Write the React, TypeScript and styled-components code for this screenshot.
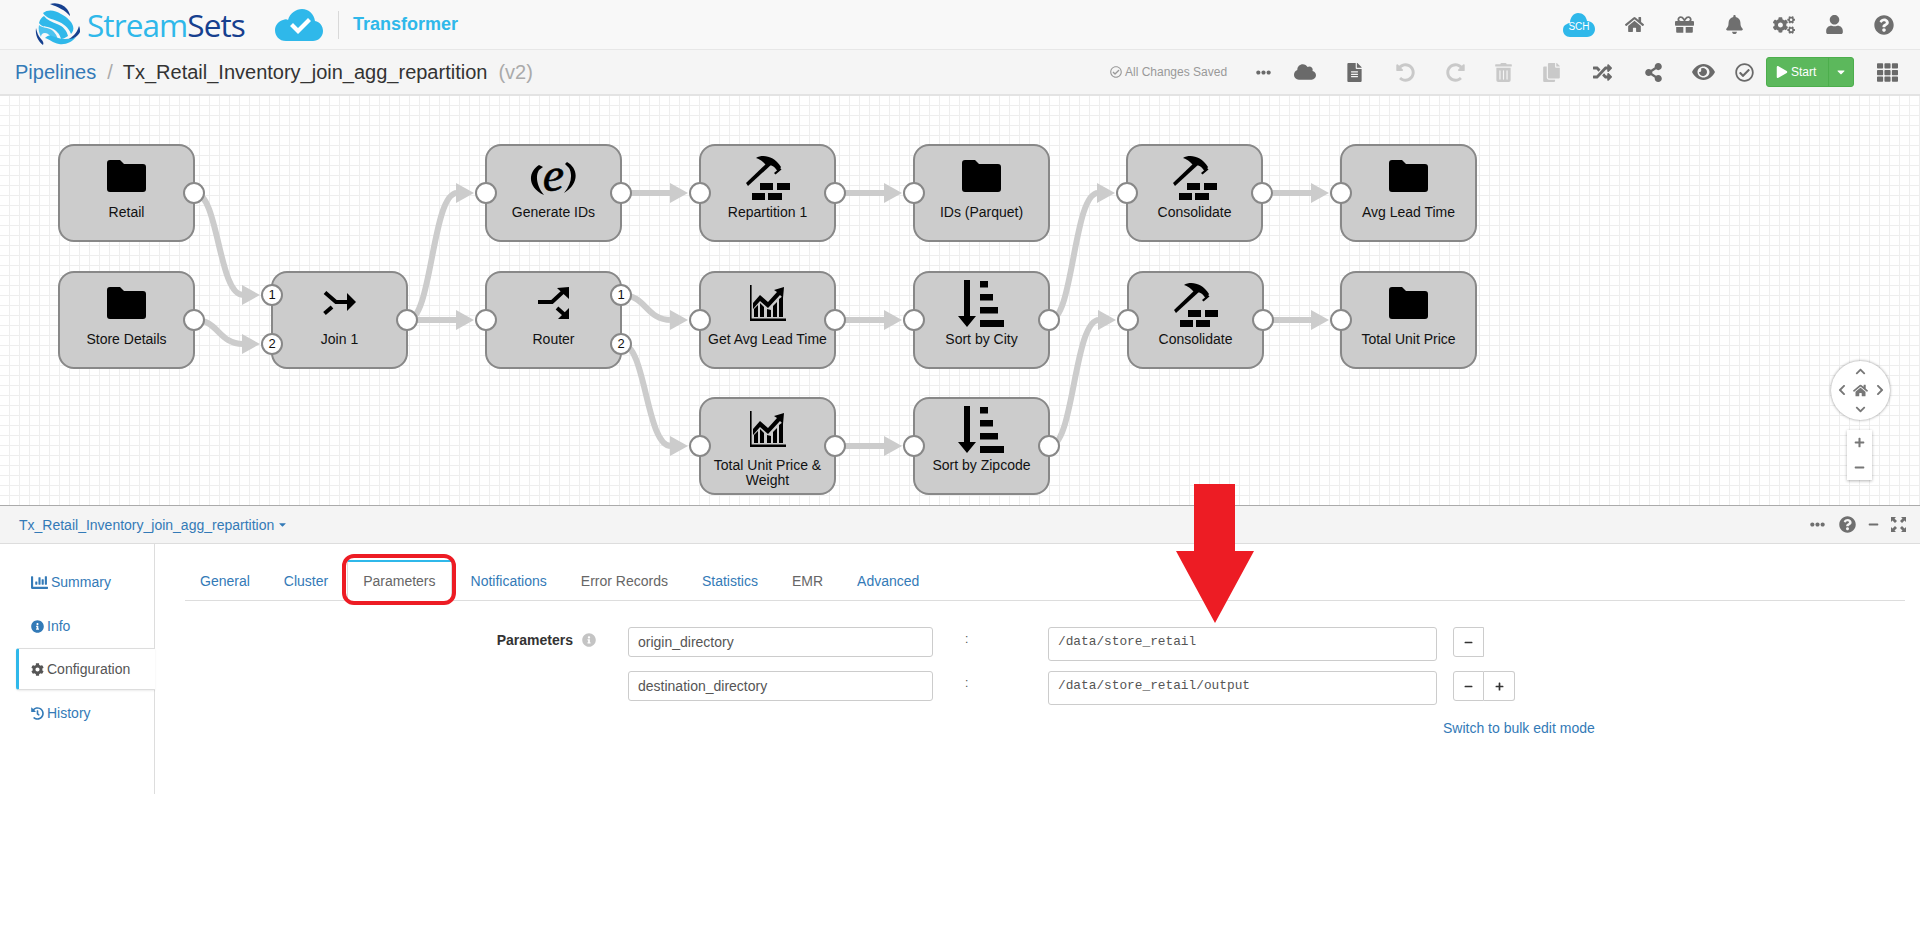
import * as React from "react";
import styled, { createGlobalStyle } from "styled-components";
import {
  FaCaretDown,
  FaChartBar,
  FaChevronDown,
  FaChevronLeft,
  FaChevronRight,
  FaChevronUp,
  FaCloud,
  FaCog,
  FaCogs,
  FaCopy,
  FaEllipsisH,
  FaFileAlt,
  FaGift,
  FaBell,
  FaHistory,
  FaHome,
  FaInfoCircle,
  FaMinus,
  FaPlay,
  FaPlus,
  FaQuestionCircle,
  FaRandom,
  FaRedoAlt,
  FaRegCheckCircle,
  FaShareAlt,
  FaTh,
  FaTrashAlt,
  FaUndoAlt,
  FaUser,
} from "react-icons/fa";

const BLUE = "#337ab7";
const SKY = "#2fb8ea";
const RED = "#ed1c24";

const GlobalStyle = createGlobalStyle`
  html, body {
    margin: 0;
    padding: 0;
    background: #fff;
    font-family: "Liberation Sans", Arial, sans-serif;
    font-size: 14px;
    color: #333;
  }
  * { box-sizing: border-box; }
`;

const Page = styled.div`
  position: relative;
  width: 1920px;
  height: 951px;
  overflow: hidden;
`;

/* top bar */

const TopBar = styled.header`
  display: flex;
  align-items: center;
  height: 50px;
  padding-left: 35px;
  background: #f8f8f8;
  border-bottom: 1px solid #e7e7e7;
`;

const LogoText = styled.div`
  margin-left: 6px;
  font-family: "Open Sans", sans-serif;
  font-size: 31.5px;
  letter-spacing: -0.9px;
  color: ${SKY};
  line-height: 48px;
  width: 181px;

  b {
    font-weight: 400;
    color: #16408f;
  }
`;

const ProductDivider = styled.div`
  width: 1px;
  height: 28px;
  margin: 0 14px 0 15px;
  background: #d9d9d9;
`;

const ProductName = styled.div`
  font-size: 18px;
  font-weight: 700;
  color: ${SKY};
`;

const TopIcons = styled.div`
  display: flex;
  align-items: center;
  margin-left: auto;
  color: #6f6f6f;
`;

const TopIcon = styled.span<{ $w: number }>`
  display: flex;
  justify-content: center;
  width: ${(p) => p.$w}px;
  font-size: 19px;
`;

const SchBadge = styled.div`
  position: relative;
  display: flex;
  width: 32px;
  height: 24px;
  margin-right: 14px;

  span {
    position: absolute;
    left: 0;
    right: 0;
    top: 8px;
    text-align: center;
    font-size: 10px;
    line-height: 12px;
    color: #fff;
  }
`;

/* breadcrumb + toolbar */

const SubBar = styled.div`
  display: flex;
  align-items: center;
  height: 46px;
  padding: 0 0 0 15px;
  background: #f5f5f5;
  border-bottom: 2px solid #e3e3e3;
  font-size: 20px;
`;

const Crumb = styled.span`
  color: ${BLUE};
`;

const CrumbSlash = styled.span`
  margin: 0 10px 0 11px;
  color: #aaa;
`;

const Version = styled.span`
  margin-left: 11px;
  color: #aaa;
`;

const SavedNote = styled.div`
  display: flex;
  align-items: center;
  gap: 3px;
  margin-left: auto;
  width: 135px;
  font-size: 12px;
  color: #999;
`;

const ToolIcon = styled.span<{ $off?: boolean; $w?: number }>`
  display: flex;
  justify-content: center;
  width: ${(p) => p.$w ?? 50}px;
  font-size: 19px;
  color: ${(p) => (p.$off ? "#c9c9c9" : "#6a6a6a")};
`;

const StartGroup = styled.div`
  display: flex;
  width: 88px;
  height: 30px;
  margin: 0 22px 0 6px;
  border: 1px solid #4cae4c;
  border-radius: 3px;
  background: #5cb85c;
  color: #fff;
  font-size: 12px;
`;

const StartMain = styled.div`
  display: flex;
  align-items: center;
  gap: 3px;
  width: 62px;
  padding-left: 9px;
  border-right: 1px solid #4cae4c;
`;

const StartCaret = styled.div`
  display: flex;
  align-items: center;
  justify-content: center;
  flex: 1;
`;

/* pipeline canvas */

const Canvas = styled.section`
  position: relative;
  height: 409px;
  background-color: #fff;
  background-image: linear-gradient(to right, #eee 1px, transparent 1px),
    linear-gradient(to bottom, #eee 1px, transparent 1px);
  background-size: 10px 10px;
  background-position: 9px 9px;
  overflow: hidden;
`;

const EdgeLayer = styled.svg`
  position: absolute;
  inset: 0;
`;

const Node = styled.div<{ $x: number; $y: number }>`
  position: absolute;
  left: ${(p) => p.$x}px;
  top: ${(p) => p.$y}px;
  width: 137px;
  height: 98px;
  padding-top: 60px;
  background: #ccc;
  border: 2px solid #888;
  border-radius: 16px;
`;

const NodeIcon = styled.div`
  position: absolute;
  left: 0;
  right: 0;
  top: 0;
  height: 60px;
  display: flex;
  align-items: center;
  justify-content: center;
  color: #000;
`;

const NodeLabel = styled.div`
  margin-top: -1px;
  padding: 0 4px;
  text-align: center;
  font-size: 14px;
  line-height: 15px;
  color: #111;
`;

const Port = styled.div<{ $side: "left" | "right"; $top: number }>`
  position: absolute;
  ${(p) => p.$side}: -12px;
  top: ${(p) => p.$top}px;
  width: 22px;
  height: 22px;
  border: 2px solid #888;
  border-radius: 50%;
  background: #fff;
  font-size: 13px;
  line-height: 18px;
  text-align: center;
  color: #111;
`;

const ExprIcon = styled.div`
  position: relative;
  width: 47px;
  height: 33px;
  margin-top: 4px;
  text-align: center;

  span {
    font-family: "Liberation Serif", serif;
    font-style: italic;
    font-weight: 400;
    font-size: 48px;
    line-height: 26px;
    -webkit-text-stroke: 0.6px #000;
  }

  svg {
    position: absolute;
    left: 0;
    top: 0;
  }
`;

const PanControl = styled.div`
  position: absolute;
  left: 1831px;
  top: 265px;
  width: 59px;
  height: 59px;
  border-radius: 50%;
  background: #fff;
  box-shadow: 0 0 3px rgba(0, 0, 0, 0.45);
  color: #777;
  font-size: 11px;
`;

const PanGlyph = styled.span<{ $x: number; $y: number; $size?: number }>`
  position: absolute;
  left: ${(p) => p.$x}px;
  top: ${(p) => p.$y}px;
  display: flex;
  font-size: ${(p) => p.$size ?? 11}px;
`;

const ZoomControl = styled.div`
  position: absolute;
  left: 1847px;
  top: 334px;
  width: 25px;
  height: 50px;
  display: flex;
  flex-direction: column;
  align-items: center;
  justify-content: space-around;
  background: #fff;
  box-shadow: 0 1px 3px rgba(0, 0, 0, 0.3);
  color: #777;
  font-size: 11px;
`;

/* detail pane */

const DetailHeader = styled.div`
  display: flex;
  align-items: center;
  height: 39px;
  padding: 0 3px 0 19px;
  background: #f4f4f4;
  border-top: 1px solid #aaa;
  border-bottom: 1px solid #ddd;
  color: ${BLUE};
`;

const PipelineMenu = styled.div`
  display: flex;
  align-items: center;
  gap: 3px;
`;

const DetailTools = styled.div`
  display: flex;
  align-items: center;
  margin-left: auto;
  color: #6f6f6f;
  font-size: 13px;
`;

const DetailTool = styled.span<{ $w: number; $size?: number }>`
  display: flex;
  justify-content: center;
  width: ${(p) => p.$w}px;
  font-size: ${(p) => p.$size ?? 13}px;
`;

const DetailBody = styled.div`
  display: flex;
  align-items: flex-start;
`;

const SideNav = styled.nav`
  width: 155px;
  height: 250px;
  padding-top: 16px;
  border-right: 1px solid #ddd;
`;

const SideItem = styled.div<{ $active?: boolean }>`
  display: flex;
  align-items: center;
  gap: 3px;
  height: 44px;
  margin-left: 16px;
  padding-left: 15px;
  color: ${BLUE};
  ${(p) =>
    p.$active &&
    `
    height: 42px;
    margin: 0 -1px 1px 16px;
    padding-left: 12px;
    background: #fff;
    color: #555;
    border-left: 3px solid ${SKY};
    border-top: 1px solid #ddd;
    border-bottom: 1px solid #ddd;
    border-radius: 3px 0 0 3px;
    box-shadow: 0 1px 2px rgba(0,0,0,.08);
  `}
`;

const Content = styled.div`
  flex: 1;
  padding: 16px 15px 0 30px;
`;

const Tabs = styled.div`
  display: flex;
  height: 41px;
  border-bottom: 1px solid #ddd;
`;

const Tab = styled.div<{ $active?: boolean; $muted?: boolean }>`
  padding: 11px 15px 0;
  height: 41px;
  line-height: 20px;
  margin-right: 4px;
  color: ${(p) => (p.$active || p.$muted ? "#666" : BLUE)};
  ${(p) =>
    p.$active &&
    `
    padding-top: 9px;
    border-top: 2px solid ${SKY};
    border-left: 1px solid #ddd;
    border-right: 1px solid #ddd;
    background: #fff;
  `}
`;

const ParamGrid = styled.div`
  display: grid;
  grid-template-columns: 414px 305px 115px 389px 16px auto;
  grid-auto-rows: 44px;
  margin-top: 26px;
  padding-left: 29px;
  align-items: start;
`;

const ParamLabel = styled.div`
  display: flex;
  align-items: center;
  justify-content: flex-end;
  gap: 9px;
  padding: 5px 32px 0 0;
  font-weight: 700;
  font-size: 14px;
  color: #333;
`;

const InfoGlyph = styled.span`
  display: flex;
  color: #c4c4c4;
  font-size: 14px;
`;

const KeyInput = styled.div`
  height: 30px;
  padding: 0 9px;
  line-height: 28px;
  border: 1px solid #ccc;
  border-radius: 3px;
  background: #fff;
  font-size: 14px;
  color: #555;
`;

const ValueInput = styled.div`
  height: 34px;
  padding: 0 9px;
  line-height: 27px;
  border: 1px solid #ccc;
  border-radius: 3px;
  background: #fff;
  font-family: "Liberation Mono", monospace;
  font-size: 12.8px;
  color: #555;
`;

const Colon = styled.div`
  padding: 5px 0 0 32px;
  font-size: 12px;
  color: #555;
`;

const ButtonPair = styled.div`
  display: flex;
`;

const SmallButton = styled.div<{ $join?: boolean }>`
  display: flex;
  align-items: center;
  justify-content: center;
  width: 31px;
  height: 30px;
  border: 1px solid #ccc;
  border-left-width: ${(p) => (p.$join ? 0 : 1)}px;
  border-radius: ${(p) => (p.$join ? "0 3px 3px 0" : "3px 0 0 3px")};
  background: #fff;
  color: #333;
  font-size: 9px;
`;

const BulkLink = styled.div`
  grid-column: 4 / span 3;
  padding: 0 0 0 395px;
  margin-top: 5px;
  color: ${BLUE};
  font-size: 14px;
  white-space: nowrap;
`;

/* the red marks someone drew on the screenshot */

const TabMark = styled.div`
  position: absolute;
  left: 342px;
  top: 554px;
  width: 114px;
  height: 51px;
  border: 4px solid ${RED};
  border-radius: 12px;
`;

const ArrowMark = styled.svg`
  position: absolute;
  left: 1176px;
  top: 484px;
`;

/* stage icons */

const FolderIcon = () => (
  <svg width="39" height="32" viewBox="0 0 39 32">
    <path d="M3 0h10l4 4h19a3 3 0 0 1 3 3v22a3 3 0 0 1-3 3H3a3 3 0 0 1-3-3V3a3 3 0 0 1 3-3z" fill="#000" />
  </svg>
);

const HammerIcon = () => (
  <svg width="46" height="46" viewBox="0 0 46 46" style={{ marginTop: 4 }}>
    <path d="M1 28L24 6l3 3L3 31z" fill="#000" />
    <path d="M11 3C18-1 29 1 36 12l-3 5c-3-5-7-8-11-6l-4-4c-2-2-4-3-7-4z" fill="#000" />
    <path d="M29 18l6-5 1.500 1.500-6 5z" fill="#000" />
    <path d="M15 28h13v7H15zM32 28h13v7H32zM7 38h13v7H7zM23 38h14v7H23z" fill="#000" />
  </svg>
);

const ChartIcon = () => (
  <svg width="36" height="36" viewBox="0 0 36 36" fill="#000">
    <path d="M0 0h1.600v33.500H36V36H0z" />
    <path d="M3 18l7-8 8 7 9-10-3-2 10-3-1 11-3-3-12 13-8-7-7 8z" />
    <path d="M4 24l4-4v12H4zM10 18l4 4v10h-4zM17 24l4 1v7h-4zM23 21l4-4v15h-4zM29 14l4-3v21h-4z" />
  </svg>
);

const SortIcon = () => (
  <svg width="46" height="47" viewBox="0 0 46 47" fill="#000" style={{ marginTop: 1, marginLeft: -2 }}>
    <path d="M6 0h6v36h6L9 47 0 36h6z" />
    <path d="M22 1h8v6.500h-8zM22 14h13v6.500H22zM22 27h18v6.500H22zM22 40h24v7H22z" />
  </svg>
);

const JoinIcon = () => (
  <svg width="33" height="25" viewBox="0 0 33 25">
    <path d="M2 1.500L13 11h12" fill="none" stroke="#000" strokeWidth="4" />
    <path d="M24 2l9 9-9 9z" fill="#000" />
    <path d="M1.500 22.500L9 16" fill="none" stroke="#000" strokeWidth="4" />
  </svg>
);

const RouterIcon = () => (
  <svg width="32" height="33" viewBox="0 0 32 33">
    <path d="M0 15h14L27 3" fill="none" stroke="#000" strokeWidth="4" />
    <path d="M19 1l12-1v12z" fill="#000" />
    <path d="M19 21l9 8" fill="none" stroke="#000" strokeWidth="4" />
    <path d="M20 32h11V21z" fill="#000" />
  </svg>
);

const ExprGlyph = () => (
  <ExprIcon>
    <span>e</span>
    <svg width="47" height="33" viewBox="0 0 47 33" fill="#000">
      <path d="M9 3C-2 10-3 25 14 33 7 25 5 14 9 8l4-3z" />
      <path d="M37 0c11 6 13 21-3 31 7-8 9-18 5-25l-4-4z" />
    </svg>
  </ExprIcon>
);

const iconFor = {
  folder: <FolderIcon />,
  hammer: <HammerIcon />,
  chart: <ChartIcon />,
  sort: <SortIcon />,
  join: <JoinIcon />,
  router: <RouterIcon />,
  expr: <ExprGlyph />,
};

type Stage = {
  id: string;
  x: number;
  y: number;
  label: string;
  icon: keyof typeof iconFor;
  input?: boolean;
  inputs?: number;
  output?: boolean;
  outputs?: number;
};

const COL = [58, 271, 485, 699, 913, 1126, 1340];
const ROW = [48, 175, 301];

const stages: Stage[] = [
  { id: "retail", x: COL[0], y: ROW[0], label: "Retail", icon: "folder", output: true },
  { id: "store", x: COL[0], y: ROW[1], label: "Store Details", icon: "folder", output: true },
  { id: "join", x: COL[1], y: ROW[1], label: "Join 1", icon: "join", inputs: 2, output: true },
  { id: "gen", x: COL[2], y: ROW[0], label: "Generate IDs", icon: "expr", input: true, output: true },
  { id: "router", x: COL[2], y: ROW[1], label: "Router", icon: "router", input: true, outputs: 2 },
  { id: "repart", x: COL[3], y: ROW[0], label: "Repartition 1", icon: "hammer", input: true, output: true },
  { id: "avg", x: COL[3], y: ROW[1], label: "Get Avg Lead Time", icon: "chart", input: true, output: true },
  { id: "total", x: COL[3], y: ROW[2], label: "Total Unit Price & Weight", icon: "chart", input: true, output: true },
  { id: "ids", x: COL[4], y: ROW[0], label: "IDs (Parquet)", icon: "folder", input: true },
  { id: "city", x: COL[4], y: ROW[1], label: "Sort by City", icon: "sort", input: true, output: true },
  { id: "zip", x: COL[4], y: ROW[2], label: "Sort by Zipcode", icon: "sort", input: true, output: true },
  { id: "cons1", x: COL[5], y: ROW[0], label: "Consolidate", icon: "hammer", input: true, output: true },
  { id: "cons2", x: COL[5] + 1, y: ROW[1], label: "Consolidate", icon: "hammer", input: true, output: true },
  { id: "lead", x: COL[6], y: ROW[0], label: "Avg Lead Time", icon: "folder", input: true },
  { id: "unit", x: COL[6], y: ROW[1], label: "Total Unit Price", icon: "folder", input: true },
];

// from, out port (0 = middle), to, in port (0 = middle)
const links: [string, number, string, number][] = [
  ["retail", 0, "join", 1],
  ["store", 0, "join", 2],
  ["join", 0, "gen", 0],
  ["join", 0, "router", 0],
  ["gen", 0, "repart", 0],
  ["repart", 0, "ids", 0],
  ["router", 1, "avg", 0],
  ["router", 2, "total", 0],
  ["avg", 0, "city", 0],
  ["total", 0, "zip", 0],
  ["city", 0, "cons1", 0],
  ["zip", 0, "cons2", 0],
  ["cons1", 0, "lead", 0],
  ["cons2", 0, "unit", 0],
];

const portY = (port: number) => (port === 0 ? 49 : port === 1 ? 24 : 73);

const Edge = ({ from, out, to, into }: { from: Stage; out: number; to: Stage; into: number }) => {
  const x1 = from.x + 137;
  const y1 = from.y + portY(out);
  const tip = to.x - 11;
  const base = tip - 18;
  const y2 = to.y + portY(into);
  const mid = (x1 + base) / 2;
  return (
    <g fill="#ccc">
      <path
        d={`M${x1} ${y1}C${mid} ${y1} ${mid} ${y2} ${base + 1} ${y2}`}
        fill="none"
        stroke="#ccc"
        strokeWidth="6"
      />
      <polygon points={`${base},${y2 - 10} ${tip},${y2} ${base},${y2 + 10}`} />
    </g>
  );
};

const StreamLogo = () => (
  <svg width="46" height="46" viewBox="0 0 46 46">
    <path d="M15 2c6-2 13 0 17 5 2 3 3 5 3 7-5-6-12-9-20-12z" fill="#16408f" />
    <path d="M8 11c5-4 12-3 18 1 6 3 11 8 12 12 1 3 0 6-2 8-2-6-8-11-14-13-5-2-11-3-14-8z" fill={SKY} />
    <path d="M4 21c1-4 3-6 5-7 3 4 8 6 13 8 6 2 10 7 11 12-3 2-5 3-7 3-1-5-5-9-10-11-4-2-9 0-12-5z" fill={SKY} />
    <path d="M4 23c3 3 7 2 11 4 4 2 7 6 8 11-2 1-4 1-6 0-1-4-4-7-7-7-3 0-4 2-4 4-2-4-3-8-2-12z" fill="#4cc3ef" />
    <path d="M1 26c-1 7 2 13 7 17 1-2 0-4-2-6-3-3-4-7-5-11z" fill="#16408f" />
    <path d="M10 36c4 1 8 5 14 6 7 1 13-2 17-7-4 1-7 2-11 2-5 0-9-2-13-3-3-1-5 0-7 2z" fill={SKY} />
    <path d="M34 37c5 0 9-3 11-7 0-2 0-4-1-6-1 4-3 7-5 9-2 2-4 3-5 4z" fill="#16408f" />
  </svg>
);

const CloudCheck = () => (
  <svg width="48" height="32" viewBox="0 0 48 32" style={{ marginLeft: 7 }}>
    <path
      d="M11 32C4 32 0 27 0 21c0-5 4-9 8-10 2-1 4-1 5 0C15 4 21 0 27 0c7 0 12 5 13 12 5 1 8 5 8 10 0 6-5 10-10 10z"
      fill={SKY}
    />
    <path d="M15 17l3-3 5 5 10-10 3 3-13 13z" fill="#fff" />
  </svg>
);

const SchCloud = () => (
  <svg width="32" height="24" viewBox="0 0 32 24">
    <path
      d="M7 24C3 24 0 21 0 17c0-3 1-5 4-6 1-1 2-1 3-1 0-6 4-10 8-10 5 0 8 3 9 8 5 0 8 4 8 8s-3 8-8 8z"
      fill={SKY}
    />
  </svg>
);

const ExpandIcon = () => (
  <svg width="15" height="15" viewBox="0 0 15 15" fill="#6f6f6f">
    <path d="M0 0h5L3.500 1.500 6 4 4 6 1.500 3.500 0 5zM15 0v5l-1.500-1.500L11 6 9 4l2.500-2.500L10 0zM0 15v-5l1.500 1.500L4 9l2 2-2.500 2.500L5 15zM15 15h-5l1.500-1.500L9 11l2-2 2.500 2.500L15 10z" />
  </svg>
);

const PreviewEyeIcon = () => (
  <svg width="23" height="16" viewBox="0 0 23 16" fill="#6a6a6a">
    <path d="M11.500 0C17 0 21 4 23 8c-2 4-6 8-11.500 8S2 12 0 8c2-4 6-8 11.500-8zm0 2.500C8 2.500 5.500 5 5.500 8s2.500 5.500 6 5.500 6-2.500 6-5.500-2.500-5.500-6-5.500zM9 4.500a4 4 0 1 1-2 3.500c1 .5 3-.5 2-3.500z" />
  </svg>
);

export default function App() {
  const byId = Object.fromEntries(stages.map((s) => [s.id, s]));
  return (
    <Page>
      <GlobalStyle />
      <TopBar>
        <StreamLogo />
        <LogoText>
          Stream<b>Sets</b>
        </LogoText>
        <CloudCheck />
        <ProductDivider />
        <ProductName>Transformer</ProductName>
        <TopIcons>
          <SchBadge>
            <SchCloud />
            <span>SCH</span>
          </SchBadge>
          <TopIcon $w={50}><FaHome /></TopIcon>
          <TopIcon $w={50}><FaGift /></TopIcon>
          <TopIcon $w={50}><FaBell /></TopIcon>
          <TopIcon $w={50}><FaCogs size={22} /></TopIcon>
          <TopIcon $w={50}><FaUser /></TopIcon>
          <TopIcon $w={50} style={{ marginRight: 11 }}><FaQuestionCircle size={20} /></TopIcon>
        </TopIcons>
      </TopBar>

      <SubBar>
        <Crumb>Pipelines</Crumb>
        <CrumbSlash>/</CrumbSlash>
        <span>Tx_Retail_Inventory_join_agg_repartition</span>
        <Version>(v2)</Version>
        <SavedNote>
          <FaRegCheckCircle size={12} />
          All Changes Saved
        </SavedNote>
        <ToolIcon $w={36}><FaEllipsisH size={15} /></ToolIcon>
        <ToolIcon $w={47}><FaCloud size={22} /></ToolIcon>
        <ToolIcon $w={52}><FaFileAlt /></ToolIcon>
        <ToolIcon $off><FaUndoAlt /></ToolIcon>
        <ToolIcon $off><FaRedoAlt /></ToolIcon>
        <ToolIcon $off $w={47}><FaTrashAlt /></ToolIcon>
        <ToolIcon $off $w={49}><FaCopy /></ToolIcon>
        <ToolIcon $w={53}><FaRandom /></ToolIcon>
        <ToolIcon $w={49}><FaShareAlt /></ToolIcon>
        <ToolIcon $w={50}><PreviewEyeIcon /></ToolIcon>
        <ToolIcon $w={32}><FaRegCheckCircle /></ToolIcon>
        <StartGroup>
          <StartMain>
            <FaPlay size={12} />
            Start
          </StartMain>
          <StartCaret>
            <FaCaretDown size={12} />
          </StartCaret>
        </StartGroup>
        <ToolIcon $w={22} style={{ marginRight: 22 }}><FaTh size={21} /></ToolIcon>
      </SubBar>

      <Canvas>
        <EdgeLayer width="1920" height="409">
          {links.map(([a, out, b, into]) => (
            <Edge key={a + b} from={byId[a]} out={out} to={byId[b]} into={into} />
          ))}
        </EdgeLayer>
        {stages.map((s) => (
          <Node key={s.id} $x={s.x} $y={s.y}>
            <NodeIcon>{iconFor[s.icon]}</NodeIcon>
            <NodeLabel>{s.label}</NodeLabel>
            {s.input && <Port $side="left" $top={36} />}
            {s.inputs && (
              <>
                <Port $side="left" $top={11}>1</Port>
                <Port $side="left" $top={60}>2</Port>
              </>
            )}
            {s.output && <Port $side="right" $top={36} />}
            {s.outputs && (
              <>
                <Port $side="right" $top={11}>1</Port>
                <Port $side="right" $top={60}>2</Port>
              </>
            )}
          </Node>
        ))}
        <PanControl>
          <PanGlyph $x={24} $y={5}><FaChevronUp /></PanGlyph>
          <PanGlyph $x={24} $y={43}><FaChevronDown /></PanGlyph>
          <PanGlyph $x={5} $y={23} $size={12}><FaChevronLeft /></PanGlyph>
          <PanGlyph $x={43} $y={23} $size={12}><FaChevronRight /></PanGlyph>
          <PanGlyph $x={22} $y={22} $size={15}><FaHome /></PanGlyph>
        </PanControl>
        <ZoomControl>
          <FaPlus />
          <FaMinus />
        </ZoomControl>
      </Canvas>

      <DetailHeader>
        <PipelineMenu>
          Tx_Retail_Inventory_join_agg_repartition
          <FaCaretDown size={11} />
        </PipelineMenu>
        <DetailTools>
          <DetailTool $w={20}><FaEllipsisH size={15} /></DetailTool>
          <DetailTool $w={40} $size={17}><FaQuestionCircle /></DetailTool>
          <DetailTool $w={12}><FaMinus size={11} /></DetailTool>
          <DetailTool $w={38}><ExpandIcon /></DetailTool>
        </DetailTools>
      </DetailHeader>

      <DetailBody>
        <SideNav>
          <SideItem><FaChartBar size={17} /> Summary</SideItem>
          <SideItem><FaInfoCircle size={13} /> Info</SideItem>
          <SideItem $active><FaCog size={13} /> Configuration</SideItem>
          <SideItem><FaHistory size={13} /> History</SideItem>
        </SideNav>
        <Content>
          <Tabs>
            <Tab>General</Tab>
            <Tab>Cluster</Tab>
            <Tab $active>Parameters</Tab>
            <Tab>Notifications</Tab>
            <Tab $muted>Error Records</Tab>
            <Tab>Statistics</Tab>
            <Tab $muted>EMR</Tab>
            <Tab>Advanced</Tab>
          </Tabs>
          <ParamGrid>
            <ParamLabel>
              Parameters
              <InfoGlyph><FaInfoCircle /></InfoGlyph>
            </ParamLabel>
            <KeyInput>origin_directory</KeyInput>
            <Colon>:</Colon>
            <ValueInput>/data/store_retail</ValueInput>
            <div />
            <ButtonPair>
              <SmallButton><FaMinus /></SmallButton>
            </ButtonPair>
            <div />
            <KeyInput>destination_directory</KeyInput>
            <Colon>:</Colon>
            <ValueInput>/data/store_retail/output</ValueInput>
            <div />
            <ButtonPair>
              <SmallButton><FaMinus /></SmallButton>
              <SmallButton $join><FaPlus /></SmallButton>
            </ButtonPair>
            <div />
            <div />
            <div />
            <BulkLink>Switch to bulk edit mode</BulkLink>
          </ParamGrid>
        </Content>
      </DetailBody>

      <TabMark />
      <ArrowMark width="78" height="140" viewBox="0 0 78 140">
        <path d="M18 0h41v67h19L39 139 0 67h18z" fill={RED} />
      </ArrowMark>
    </Page>
  );
}
